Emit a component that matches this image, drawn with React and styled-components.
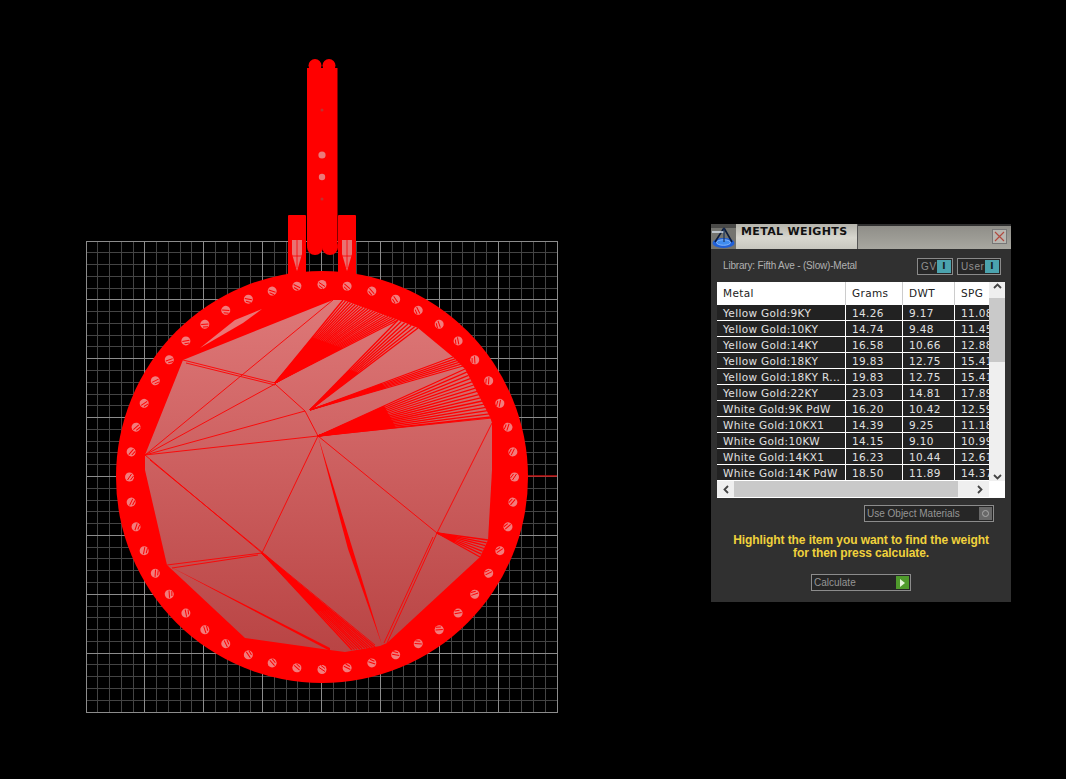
import React from 'react';
import styled, { createGlobalStyle } from 'styled-components';

const GlobalStyle = createGlobalStyle`
  html, body {
    margin: 0;
    background: #000;
    height: 100%;
    overflow: hidden;
  }
`;

const Page = styled.div`
  display: flex;
  align-items: flex-start;
  width: 1066px;
  height: 779px;
  background: #000;
`;

const Viewport = styled.svg`
  display: block;
  flex: 0 0 711px;
  width: 711px;
  height: 779px;
`;

const Panel = styled.section`
  flex: 0 0 300px;
  height: 378px;
  margin-top: 224px;
  background: #303030;
  display: flex;
  flex-direction: column;
`;

const TitleBar = styled.header`
  height: 25px;
  display: flex;
  flex: none;
`;

const TitleText = styled.div`
  width: 122px;
  padding: 1px 0 0 5px;
  box-sizing: border-box;
  background: linear-gradient(#b4b3ab, #d8d7cf 55%, #c8c7bf);
  border-right: 1px solid #555;
  color: #111;
  font: bold 11px/13px "DejaVu Sans", sans-serif;
  letter-spacing: 0.35px;
  white-space: nowrap;
`;

const TitleRest = styled.div`
  flex: 1;
  display: flex;
  align-items: center;
  justify-content: flex-end;
  padding: 0 4px 2px 0;
  margin-top: 2px;
  background: linear-gradient(#8f8e88, #a8a7a0);
`;

const CloseButton = styled.button`
  width: 15px;
  height: 15px;
  padding: 0;
  border: 1px solid #777;
  background: #b8b6b0;
  display: flex;
  align-items: center;
  justify-content: center;
`;

const LibraryRow = styled.div`
  height: 33px;
  flex: none;
  display: flex;
  align-items: center;
  padding: 1px 10px 0 12px;
  box-sizing: border-box;
  gap: 4px;
`;

const LibraryLabel = styled.div`
  flex: 1;
  color: #b0b0b0;
  font: 10px "Liberation Sans", sans-serif;
  letter-spacing: -0.18px;
  margin-top: -2px;
`;

const Toggle = styled.div`
  width: ${(p) => p.$width}px;
  height: 17px;
  box-sizing: border-box;
  border: 1px solid #8a8a8a;
  background: #262626;
  display: flex;
  align-items: center;
  justify-content: space-between;
  padding: 0 1px 0 3px;
  color: #8f8f8f;
  font: 10px "Liberation Sans", sans-serif;
  letter-spacing: 0.6px;
`;

const ToggleKnob = styled.span`
  width: 14px;
  height: 13px;
  background: #4ba3ae;
  color: #152022;
  font: bold 9px/13px "DejaVu Sans", sans-serif;
  letter-spacing: 0;
  text-align: center;
`;

const TableBox = styled.div`
  height: 216px;
  flex: none;
  margin: 0 6px;
  background: #fff;
  display: grid;
  grid-template-columns: 272px 16px;
  grid-template-rows: 199px 16px 1px;
`;

const Rows = styled.div`
  overflow: hidden;
  display: flex;
  flex-direction: column;
`;

const Row = styled.div`
  display: grid;
  grid-template-columns: 128px 56px 51px 34px;
  column-gap: 1px;
  height: ${(p) => (p.$head ? '23px' : '15px')};
  flex: none;
  margin-bottom: ${(p) => (p.$head ? '0' : '1px')};
  background: ${(p) => (p.$head ? '#ccc' : '#fff')};
`;

const Cell = styled.div`
  background: ${(p) => (p.$head ? '#fff' : '#222')};
  color: ${(p) => (p.$head ? '#222' : '#e0e0e0')};
  padding-left: 6px;
  font: 10.5px/${(p) => (p.$head ? '23px' : '17px')} "DejaVu Sans", sans-serif;
  letter-spacing: 0.35px;
  white-space: nowrap;
  overflow: hidden;
`;

const VTrack = styled.div`
  background: #efefef;
  display: flex;
  flex-direction: column;
  align-items: center;
  justify-content: space-between;
  position: relative;
`;

const VThumb = styled.div`
  position: absolute;
  left: 0;
  top: 16px;
  width: 16px;
  height: 64px;
  background: #c9c9c9;
`;

const HTrack = styled.div`
  background: #efefef;
  display: flex;
  align-items: center;
  justify-content: space-between;
  position: relative;
  grid-column: 1 / span 1;
  padding: 0 5px;
`;

const HThumb = styled.div`
  position: absolute;
  left: 17px;
  top: 0;
  width: 224px;
  height: 16px;
  background: #c9c9c9;
`;

const Corner = styled.div`
  background: #fff;
`;

const BottomLine = styled.div`
  grid-column: 1 / span 2;
  background: #fff;
`;

const MaterialsRow = styled.div`
  display: flex;
  justify-content: flex-end;
  padding: 7px 17px 0 0;
`;

const Field = styled.div`
  width: ${(p) => p.$width}px;
  height: ${(p) => p.$height}px;
  box-sizing: border-box;
  border: 1px solid #8c8c8c;
  background: #262626;
  color: #959595;
  display: flex;
  align-items: center;
  justify-content: space-between;
  padding: 0 1px 0 2px;
  font: 10px "Liberation Sans", sans-serif;
`;

const RadioKnob = styled.span`
  width: 13px;
  height: 13px;
  background: #686868;
  display: flex;
  align-items: center;
  justify-content: center;
`;

const RadioDot = styled.span`
  width: 5px;
  height: 5px;
  border: 1px solid #aaa;
  border-radius: 50%;
`;

const GoKnob = styled.span`
  width: 13px;
  height: 13px;
  background: #4f9a2c;
  display: flex;
  align-items: center;
  justify-content: center;
`;

const GoArrow = styled.span`
  width: 0;
  height: 0;
  border-left: 5px solid #e4f4da;
  border-top: 4px solid transparent;
  border-bottom: 4px solid transparent;
`;

const Hint = styled.p`
  margin: 12px 0 0;
  text-align: center;
  color: #f0d23c;
  font: bold 12px/13px "Liberation Sans", sans-serif;
  letter-spacing: -0.08px;
`;

const CalcRow = styled.div`
  display: flex;
  justify-content: center;
  padding-top: 14px;
`;

const metals = [
  ['Yellow Gold:9KY', '14.26', '9.17', '11.08'],
  ['Yellow Gold:10KY', '14.74', '9.48', '11.45'],
  ['Yellow Gold:14KY', '16.58', '10.66', '12.88'],
  ['Yellow Gold:18KY', '19.83', '12.75', '15.41'],
  ['Yellow Gold:18KY R...', '19.83', '12.75', '15.41'],
  ['Yellow Gold:22KY', '23.03', '14.81', '17.89'],
  ['White Gold:9K PdW', '16.20', '10.42', '12.59'],
  ['White Gold:10KX1', '14.39', '9.25', '11.18'],
  ['White Gold:10KW', '14.15', '9.10', '10.99'],
  ['White Gold:14KX1', '16.23', '10.44', '12.61'],
  ['White Gold:14K PdW', '18.50', '11.89', '14.37'],
];

const RED = '#ff0000';
const CX = 322;
const CY = 477;

const pts = (list) => list.map((p) => p.join(',')).join(' ');
const mix = (a, b, t) => [a[0] + (b[0] - a[0]) * t, a[1] + (b[1] - a[1]) * t];

const innerShape = [
  [145, 455], [183, 360], [333, 300], [343, 300], [398, 320], [418, 328], [453, 357],
  [465, 369], [490, 417], [492, 423], [492, 470], [488, 540], [480, 557], [387, 643],
  [380, 646], [345, 652], [330, 650], [245, 638], [167, 565], [145, 470],
];

// apex, edge start, edge end, hatch count, how far the solid part reaches
const fans = [
  { apex: [318, 436], a: [465, 369], b: [491, 417], n: 15, solid: 0.45 },
  { apex: [310, 410], a: [453, 357], b: [463, 366], n: 5, solid: 0.5 },
  { apex: [310, 410], a: [398, 320], b: [418, 328], n: 6, solid: 0.45 },
  { apex: [275, 383], a: [343, 300], b: [398, 320], n: 22, solid: 0.55 },
  { apex: [437, 533], a: [488, 540], b: [480, 557], n: 6, solid: 0.4 },
  { apex: [262, 553], a: [352, 650], b: [375, 647], n: 9, solid: 0.6 },
];

const thinLines = [
  [[145, 455], [333, 300]], [[145, 455], [275, 384]], [[145, 455], [305, 411]],
  [[145, 455], [318, 436]], [[145, 455], [262, 553]], [[150, 460], [375, 645]],
  [[183, 360], [275, 383]], [[186, 363], [275, 385]], [[275, 384], [305, 411]],
  [[305, 411], [318, 436]], [[318, 436], [262, 553]], [[262, 553], [167, 565]],
  [[258, 555], [172, 568]], [[318, 436], [437, 533]], [[437, 533], [387, 643]],
  [[433, 537], [384, 643]], [[492, 423], [437, 533]], [[318, 436], [492, 418]],
];

const Fan = ({ apex, a, b, n, solid }) => {
  const hatch = [];
  for (let i = 0; i <= n; i += 1) {
    const end = mix(a, b, i / n);
    hatch.push(
      <line key={i} x1={apex[0]} y1={apex[1]} x2={end[0]} y2={end[1]} stroke={RED} strokeWidth="1.3" />,
    );
  }
  return (
    <g>
      {hatch}
      <polygon points={pts([apex, mix(apex, a, solid), mix(apex, b, solid)])} fill={RED} />
    </g>
  );
};

const Stud = ({ x, y, angle }) => (
  <g transform={`translate(${x} ${y}) rotate(${angle})`}>
    <circle r="4.5" fill="#f27c7c" />
    <path d="M-3 -2L3 2M-3 1L1 4" stroke={RED} strokeWidth="1" />
  </g>
);

const Grid = () => {
  const minor = [];
  const major = [];
  for (let i = 0; i <= 40; i += 1) {
    const offset = i * 11.775;
    const list = i % 5 === 0 ? major : minor;
    list.push(`M${86 + offset} 241V712`, `M86 ${241 + offset}H558`);
  }
  return (
    <g shapeRendering="crispEdges">
      <path d={minor.join('')} stroke="#444" strokeWidth="1" />
      <path d={major.join('')} stroke="#8c8c8c" strokeWidth="1" />
    </g>
  );
};

const Pendant = () => {
  const studs = [];
  for (let i = 0; i < 48; i += 1) {
    const deg = i * 7.5;
    const rad = (deg * Math.PI) / 180;
    studs.push(
      <Stud key={i} x={CX + 192.5 * Math.sin(rad)} y={CY - 192.5 * Math.cos(rad)} angle={deg} />,
    );
  }
  return (
    <g>
      <path d="M528 476H557" stroke="#c01010" strokeWidth="1.5" />
      {/* bail */}
      <rect x="307" y="68" width="30.500" height="178" fill={RED} />
      <circle cx="315" cy="65.500" r="6.500" fill={RED} />
      <circle cx="329" cy="65.500" r="6.500" fill={RED} />
      <circle cx="315" cy="247" r="8" fill={RED} />
      <circle cx="330" cy="247" r="8" fill={RED} />
      <rect x="288" y="215" width="18" height="62" rx="1" fill={RED} />
      <rect x="338" y="215" width="18" height="62" rx="1" fill={RED} />
      <polygon points="292,240 302,240 302,254 297,271 292,254" fill="#e87272" />
      <polygon points="342,240 352,240 352,254 347,271 342,254" fill="#e87272" />
      <path d="M297 240V268M347 240V268M292 256H302M342 256H352" stroke={RED} strokeWidth="0.8" />
      <circle cx="322" cy="155" r="3.600" fill="#ea7a7a" />
      <circle cx="322" cy="177" r="3.200" fill="#ea7a7a" />
      <circle cx="322" cy="110" r="1.500" fill="#c03030" />
      <circle cx="322" cy="199" r="1.500" fill="#c03030" />
      {/* ring and stone seat */}
      <circle cx={CX} cy={CY} r="206" fill={RED} />
      <polygon points={pts(innerShape)} fill="url(#seat)" />
      <polygon points="200,348 235,320 262,309 243,323" fill="#ea7676" />
      {thinLines.map(([from, to], i) => (
        <line key={i} x1={from[0]} y1={from[1]} x2={to[0]} y2={to[1]} stroke={RED} strokeWidth="0.9" />
      ))}
      {fans.map((fan, i) => (
        <Fan key={i} {...fan} />
      ))}
      <polygon points="318,436 352,547 382,645 348,549" fill={RED} />
      <polygon points="167,565 330,648 330,651" fill={RED} />
      {studs}
    </g>
  );
};

const LogoIcon = () => (
  <svg width="25" height="25" viewBox="0 0 25 25" style={{ display: 'block', flex: 'none' }}>
    <rect width="25" height="25" fill="#74746f" />
    <rect width="25" height="4" fill="#4a4a48" />
    <ellipse cx="12.500" cy="19" rx="11" ry="5" fill="#2060d8" />
    <ellipse cx="12.500" cy="18.500" rx="7" ry="2.800" fill="#3f8cf0" stroke="#9cc8ff" strokeWidth="0.8" />
    <path d="M13 4L4 18M13 4L21 18" stroke="#0d1c3a" strokeWidth="1.6" fill="none" />
    <path d="M1 8H13" stroke="#dfe8f5" strokeWidth="1.4" />
    <path d="M13 4V18" stroke="#16325f" strokeWidth="1.2" />
  </svg>
);

const Chevron = ({ d }) => (
  <svg width="9" height="9" viewBox="0 0 9 9" style={{ display: 'block' }}>
    <path d={d} fill="none" stroke="#444" strokeWidth="1.8" />
  </svg>
);

const App = () => (
  <Page>
    <GlobalStyle />
    <Viewport viewBox="0 0 711 779">
      <defs>
        <linearGradient id="seat" gradientUnits="userSpaceOnUse" x1="0" y1="300" x2="0" y2="652">
          <stop offset="0" stopColor="#de7878" />
          <stop offset="1" stopColor="#b94444" />
        </linearGradient>
      </defs>
      <Grid />
      <Pendant />
    </Viewport>

    <Panel>
      <TitleBar>
        <LogoIcon />
        <TitleText>METAL WEIGHTS</TitleText>
        <TitleRest>
          <CloseButton aria-label="Close">
            <svg width="11" height="11" viewBox="0 0 11 11">
              <path d="M1 1L10 10M10 1L1 10" stroke="#b04a40" strokeWidth="1.2" />
            </svg>
          </CloseButton>
        </TitleRest>
      </TitleBar>

      <LibraryRow>
        <LibraryLabel>Library: Fifth Ave - (Slow)-Metal</LibraryLabel>
        <Toggle $width={36}>GV<ToggleKnob>I</ToggleKnob></Toggle>
        <Toggle $width={44}>User<ToggleKnob>I</ToggleKnob></Toggle>
      </LibraryRow>

      <TableBox>
        <Rows>
          <Row $head>
            {['Metal', 'Grams', 'DWT', 'SPG'].map((h) => (
              <Cell $head key={h}>{h}</Cell>
            ))}
          </Row>
          {metals.map((m) => (
            <Row key={m[0]}>
              {m.map((v, i) => (
                <Cell key={i}>{v}</Cell>
              ))}
            </Row>
          ))}
        </Rows>
        <VTrack>
          <VThumb />
          <Chevron d="M1 6L4.500 2.500L8 6" />
          <Chevron d="M1 3L4.500 6.500L8 3" />
        </VTrack>
        <HTrack>
          <HThumb />
          <Chevron d="M6 1L2.500 4.500L6 8" />
          <Chevron d="M3 1L6.500 4.500L3 8" />
        </HTrack>
        <Corner />
        <BottomLine />
      </TableBox>

      <MaterialsRow>
        <Field $width={130} $height={17}>
          Use Object Materials
          <RadioKnob><RadioDot /></RadioKnob>
        </Field>
      </MaterialsRow>

      <Hint>
        Highlight the item you want to find the weight
        <br />
        for then press calculate.
      </Hint>

      <CalcRow>
        <Field $width={100} $height={17}>
          Calculate
          <GoKnob><GoArrow /></GoKnob>
        </Field>
      </CalcRow>
    </Panel>
  </Page>
);

export default App;
